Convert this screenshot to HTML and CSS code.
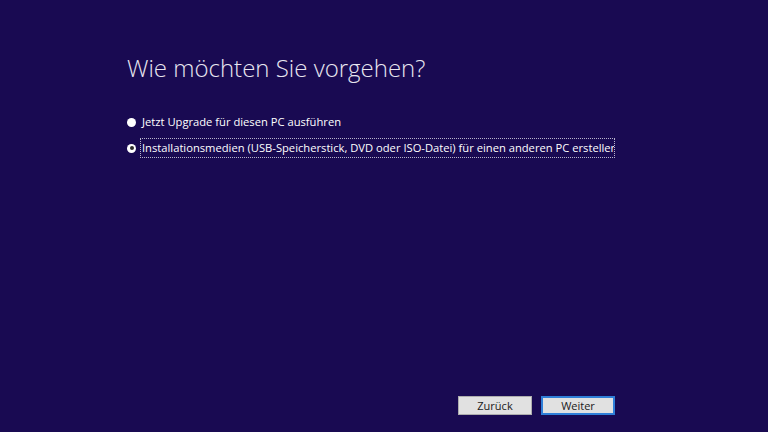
FILE: index.html
```html
<!DOCTYPE html>
<html lang="de">
<head>
<meta charset="utf-8">
<link rel="stylesheet" href="styles.css">
</head>
<body>
<div class="page">
  <h1 class="title">Wie möchten Sie vorgehen?</h1>
  <div class="options">
    <div class="option">
      <span class="radio"></span>
      <span class="label">Jetzt Upgrade für diesen PC ausführen</span>
    </div>
    <div class="option">
      <span class="radio checked"><span class="dot"></span></span>
      <span class="label focus">Installationsmedien (USB-Speicherstick, DVD oder ISO-Datei) für einen anderen PC erstellen</span>
    </div>
  </div>
  <div class="spacer"></div>
  <div class="buttons">
    <button class="btn">Zurück</button>
    <button class="btn primary">Weiter</button>
  </div>
</div>
</body>
</html>
```
FILE: styles.css
```css
html, body {
  margin: 0;
  padding: 0;
  background: #190a52;
}
.page {
  box-sizing: border-box;
  width: 768px;
  height: 432px;
  padding: 51px 0 17px 127px;
  display: flex;
  flex-direction: column;
}
.title {
  margin: 0;
  font-family: "Open Sans", "Noto Sans", sans-serif;
  font-weight: 300;
  font-size: 24px;
  line-height: 34px;
  color: #e8e6f0;
}
.options {
  margin-top: 27px;
  width: 488px;
  display: flex;
  flex-direction: column;
  gap: 6px;
}
.option {
  display: flex;
  align-items: center;
  height: 20px;
  overflow: hidden;
}
.radio {
  flex: none;
  box-sizing: border-box;
  width: 9px;
  height: 9px;
  border-radius: 50%;
  background: #ffffff;
  margin-right: 6px;
  display: flex;
  align-items: center;
  justify-content: center;
}
.radio.checked {
  margin-right: 4px;
}
.dot {
  width: 4px;
  height: 4px;
  border-radius: 50%;
  background: #2a2a2a;
}
.label {
  font-family: "Open Sans", "Noto Sans", sans-serif;
  font-size: 11.2px;
  color: #ffffff;
  white-space: nowrap;
  line-height: 16px;
}
.label.focus {
  box-sizing: border-box;
  height: 20px;
  line-height: 18px;
  border: 1px dotted #b8b4cc;
  padding: 0 1px;
  flex: 1;
  overflow: hidden;
}
.spacer {
  flex: 1;
}
.buttons {
  width: 488px;
  display: flex;
  justify-content: flex-end;
  gap: 9px;
}
.btn {
  box-sizing: border-box;
  width: 74px;
  height: 19px;
  padding: 0;
  background: #e1e1e1;
  border: 1px solid #adadad;
  font-family: "Open Sans", "Noto Sans", sans-serif;
  font-size: 11px;
  color: #1a1a1a;
}
.btn.primary {
  border: 2px solid #2f7fd8;
}
```
